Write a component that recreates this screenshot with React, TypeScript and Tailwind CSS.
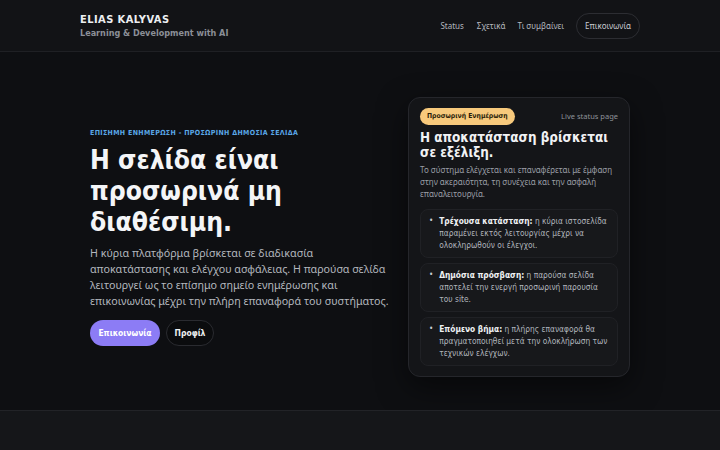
type Item = { label: string; text: string }

const items: Item[] = [
    { label: 'Τρέχουσα κατάσταση:', text: 'η κύρια ιστοσελίδα παραμένει εκτός λειτουργίας μέχρι να ολοκληρωθούν οι έλεγχοι.' },
    { label: 'Δημόσια πρόσβαση:', text: 'η παρούσα σελίδα αποτελεί την ενεργή προσωρινή παρουσία του site.' },
    { label: 'Επόμενο βήμα:', text: 'η πλήρης επαναφορά θα πραγματοποιηθεί μετά την ολοκλήρωση των τεχνικών ελέγχων.' },
]

const sans = "font-['Noto_Sans',sans-serif]"

function Header() {
    return (
        <header className="h-[52px] border-b border-[#1f2024] bg-[#121316]">
            <div className="mx-auto flex h-full w-[560px] items-center justify-between">
                <div>
                    <p className="text-[11px] font-bold leading-[14px] tracking-[0.04em] text-[#eceef1]">ELIAS KALYVAS</p>
                    <p className="text-[9px] font-bold leading-[12px] text-[#8b8f97]">Learning &amp; Development with AI</p>
                </div>
                <nav className={`${sans} flex items-center text-[8px] text-[#b4b8bf]`}>
                    <a className="mr-[13px]">Status</a>
                    <a className="mr-[12px]">Σχετικά</a>
                    <a className="mr-[12px]">Τι συμβαίνει</a>
                    <a className="flex h-[26px] w-[64px] items-center justify-center rounded-full border border-[#2c2d32] text-[#c9ccd2]">Επικοινωνία</a>
                </nav>
            </div>
        </header>
    )
}

function StatusCard() {
    return (
        <div className="w-[222px] shrink-0 rounded-[12px] border border-[#25262b] bg-[#141518] px-[11px] pb-[10px] pt-[10px] shadow-[0_10px_30px_rgba(0,0,0,0.5)]">
            <div className="flex items-center justify-between">
                <span className="inline-flex h-[17px] items-center rounded-full bg-[#f7c97c] px-[7px] text-[6.8px] font-bold text-[#2a1d08]">Προσωρινή Ενημέρωση</span>
                <span className={`${sans} text-[7.5px] text-[#8e9299]`}>Live status page</span>
            </div>
            <h2 className="mt-[5px] text-[13.4px] font-bold leading-[15px] text-[#f1f2f4]">Η αποκατάσταση βρίσκεται σε εξέλιξη.</h2>
            <p className={`${sans} mt-[4px] text-[8px] leading-[12px] text-[#9a9ea6]`}>
                Το σύστημα ελέγχεται και επαναφέρεται με έμφαση στην ακεραιότητα, τη συνέχεια και την ασφαλή επαναλειτουργία.
            </p>
            <div className="mt-[9px] flex flex-col gap-[5px]">
                {items.map((item) => (
                    <div key={item.label} className="flex rounded-[8px] border border-[#202125] bg-[#17181b] pb-[6px] pl-[8px] pr-[6px] pt-[5px]">
                        <span className="mr-[6px] text-[8px] leading-[12px] text-[#c9ccd2]">•</span>
                        <p className="text-[8.3px] leading-[12px] text-[#b0b4bb]">
                            <b className="text-[#eef0f2]">{item.label}</b> {item.text}
                        </p>
                    </div>
                ))}
            </div>
        </div>
    )
}

export default function App() {
    return (
        <div className="flex min-h-[450px] flex-col bg-[#0e0f12] font-['DejaVu_Sans_Condensed','DejaVu_Sans',sans-serif]">
            <Header />
            <main className="flex h-[358px] items-center pt-[12px]">
                <div className="mx-auto flex w-[560px] items-center justify-between px-[10px]">
                    <div className="w-[305px]">
                        <p className="text-[7px] font-bold tracking-[0.05em] text-[#5aa8e8]">
                            ΕΠΙΣΗΜΗ ΕΝΗΜΕΡΩΣΗ - ΠΡΟΣΩΡΙΝΗ ΔΗΜΟΣΙΑ ΣΕΛΙΔΑ
                        </p>
                        <h1 className="mt-[7px] text-[26.3px] font-bold leading-[31px] text-[#f4f5f7]">
                            Η σελίδα είναι προσωρινά μη διαθέσιμη.
                        </h1>
                        <p className={`${sans} mt-[7px] text-[10.7px] leading-[16px] text-[#b3b7be]`}>
                            Η κύρια πλατφόρμα βρίσκεται σε διαδικασία αποκατάστασης και ελέγχου ασφάλειας. Η παρούσα σελίδα λειτουργεί ως το επίσημο σημείο ενημέρωσης και επικοινωνίας μέχρι την πλήρη επαναφορά του συστήματος.
                        </p>
                        <div className="mt-[11px] flex gap-[6px] text-[8.5px] font-bold">
                            <button className="h-[26px] w-[70px] rounded-full bg-[#8c7cf5] text-white">Επικοινωνία</button>
                            <button className="h-[26px] w-[48px] rounded-full border border-[#2a2b30] bg-[#0b0c0e] text-[#eef0f2]">Προφίλ</button>
                        </div>
                    </div>
                    <StatusCard />
                </div>
            </main>
            <footer className="flex-1 border-t border-[#222327] bg-[#151619]" />
        </div>
    )
}
